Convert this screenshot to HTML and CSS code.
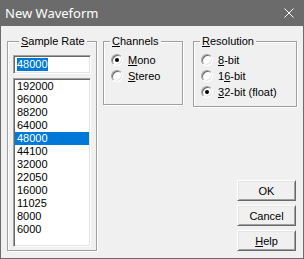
FILE: index.html
```html
<!DOCTYPE html>
<html lang="en">
<head>
  <meta charset="UTF-8">
  <title>New Waveform</title>
  <link rel="stylesheet" href="styles.css">
</head>
<body>
  <div class="window">
    <div class="titlebar">
      <span class="title">New Waveform</span>
      <svg class="close" width="10" height="10" viewBox="0 0 10 10">
        <path d="M0.5 0.5 L9.5 9.5 M9.5 0.5 L0.5 9.5" stroke="#fff" stroke-width="1" fill="none"/>
      </svg>
    </div>

    <div class="content">
      <fieldset class="group rate">
        <legend><u>S</u>ample Rate</legend>
        <div class="edit"><span class="sel">48000</span></div>
        <ul class="list">
          <li>192000</li>
          <li>96000</li>
          <li>88200</li>
          <li>64000</li>
          <li class="selected">48000</li>
          <li>44100</li>
          <li>32000</li>
          <li>22050</li>
          <li>16000</li>
          <li>11025</li>
          <li>8000</li>
          <li>6000</li>
        </ul>
      </fieldset>

      <div class="side">
        <div class="groups">
          <fieldset class="group channels">
            <legend><u>C</u>hannels</legend>
            <div class="radio"><span class="dot checked"></span><u>M</u>ono</div>
            <div class="radio"><span class="dot"></span><u>S</u>tereo</div>
          </fieldset>

          <fieldset class="group resolution">
            <legend><u>R</u>esolution</legend>
            <div class="radio"><span class="dot"></span><u>8</u>-bit</div>
            <div class="radio"><span class="dot"></span>1<u>6</u>-bit</div>
            <div class="radio"><span class="dot checked"></span><u>3</u>2-bit (float)</div>
          </fieldset>
        </div>

        <div class="buttons">
          <button type="button">OK</button>
          <button type="button">Cancel</button>
          <button type="button"><u>H</u>elp</button>
        </div>
      </div>
    </div>
  </div>
</body>
</html>
```

FILE: styles.css
```css
body {
  margin: 0;
  font-family: 'Liberation Sans', Arial, sans-serif;
  font-size: 11px;
  color: #000;
  background-color: #f0f0f0;
}

.window {
  width: 304px;
  height: 259px;
  display: flex;
  flex-direction: column;
}

.titlebar {
  height: 26px;
  background-color: #6b6b6b; /* inactive caption */
  display: flex;
  align-items: center;
  padding: 0 10px 0 5px;
  color: #fff;
}

.title {
  flex: 1;
  font-family: 'Noto Sans', 'Open Sans', sans-serif;
  font-size: 13px;
}

.close {
  display: block;
}

.content {
  flex: 1;
  display: flex;
  padding: 9px 6px 7px 6px;
  border: 1px solid #6b6b6b;
  border-top: none;
}

/* etched group boxes */
.group {
  margin: 0;
  padding: 0;
  min-width: 0;
  box-sizing: border-box;
  border: 1px solid #a0a0a0;
  box-shadow: inset 1px 1px 0 #fff, 1px 1px 0 #fff;
}

.group legend {
  margin-left: 6px;
  padding: 0 2px;
  line-height: 13px;
  background-color: #f0f0f0;
}

.rate {
  width: 90px;
  margin-right: 6px;
  display: flex;
  flex-direction: column;
  padding: 0 5px 3px 5px;
}

.edit {
  margin-top: 7px;
  height: 19px;
  box-sizing: border-box;
  background-color: #fff;
  border: 1px solid;
  border-color: #a0a0a0 #fff #fff #a0a0a0;
  box-shadow: inset 1px 1px 0 #696969, inset -1px -1px 0 #e3e3e3;
  padding: 2px 3px;
  line-height: 13px;
}

.sel {
  background-color: #0078d7;
  color: #fff;
  display: inline-block;
}

.list {
  list-style: none;
  margin: 4px 0 0 0;
  padding: 1px;
  height: 169px;
  box-sizing: border-box;
  background-color: #fff;
  border: 1px solid;
  border-color: #a0a0a0 #fff #fff #a0a0a0;
  box-shadow: inset 1px 1px 0 #696969, inset -1px -1px 0 #e3e3e3;
}

.list li {
  line-height: 13px;
  padding-left: 2px;
}

.list li.selected {
  background-color: #0078d7;
  color: #fff;
}

.side {
  flex: 1;
  display: flex;
  flex-direction: column;
}

.groups {
  display: flex;
  align-items: flex-start;
}

.channels {
  width: 80px;
  height: 70px;
  margin-right: 10px;
  padding-top: 4px;
}

.resolution {
  width: 104px;
  height: 72px;
  padding-top: 4px;
}

.radio {
  height: 16px;
  display: flex;
  align-items: center;
  padding-left: 7px;
}

.dot {
  width: 12px;
  height: 12px;
  box-sizing: border-box;
  border-radius: 50%;
  background-color: #fff;
  border: 1px solid;
  border-color: #a0a0a0 #fff #fff #a0a0a0;
  box-shadow: inset 1px 1px 0 #696969, inset -1px -1px 0 #e3e3e3;
  margin-right: 5px;
  display: flex;
  align-items: center;
  justify-content: center;
}

.dot.checked::after {
  content: "";
  width: 4px;
  height: 4px;
  border-radius: 50%;
  background-color: #000;
}

.buttons {
  flex: 1;
  display: flex;
  flex-direction: column;
  align-items: flex-end;
  justify-content: flex-end;
  gap: 4px;
  padding-right: 1px;
}

button {
  width: 59px;
  height: 21px;
  margin: 0;
  padding: 0;
  font-family: 'Liberation Sans', Arial, sans-serif;
  font-size: 11px;
  color: #000;
  background-color: #f0f0f0;
  border: 1px solid;
  border-color: #fff #696969 #696969 #fff;
  box-shadow: inset 1px 1px 0 #e3e3e3, inset -1px -1px 0 #a0a0a0;
}
```
